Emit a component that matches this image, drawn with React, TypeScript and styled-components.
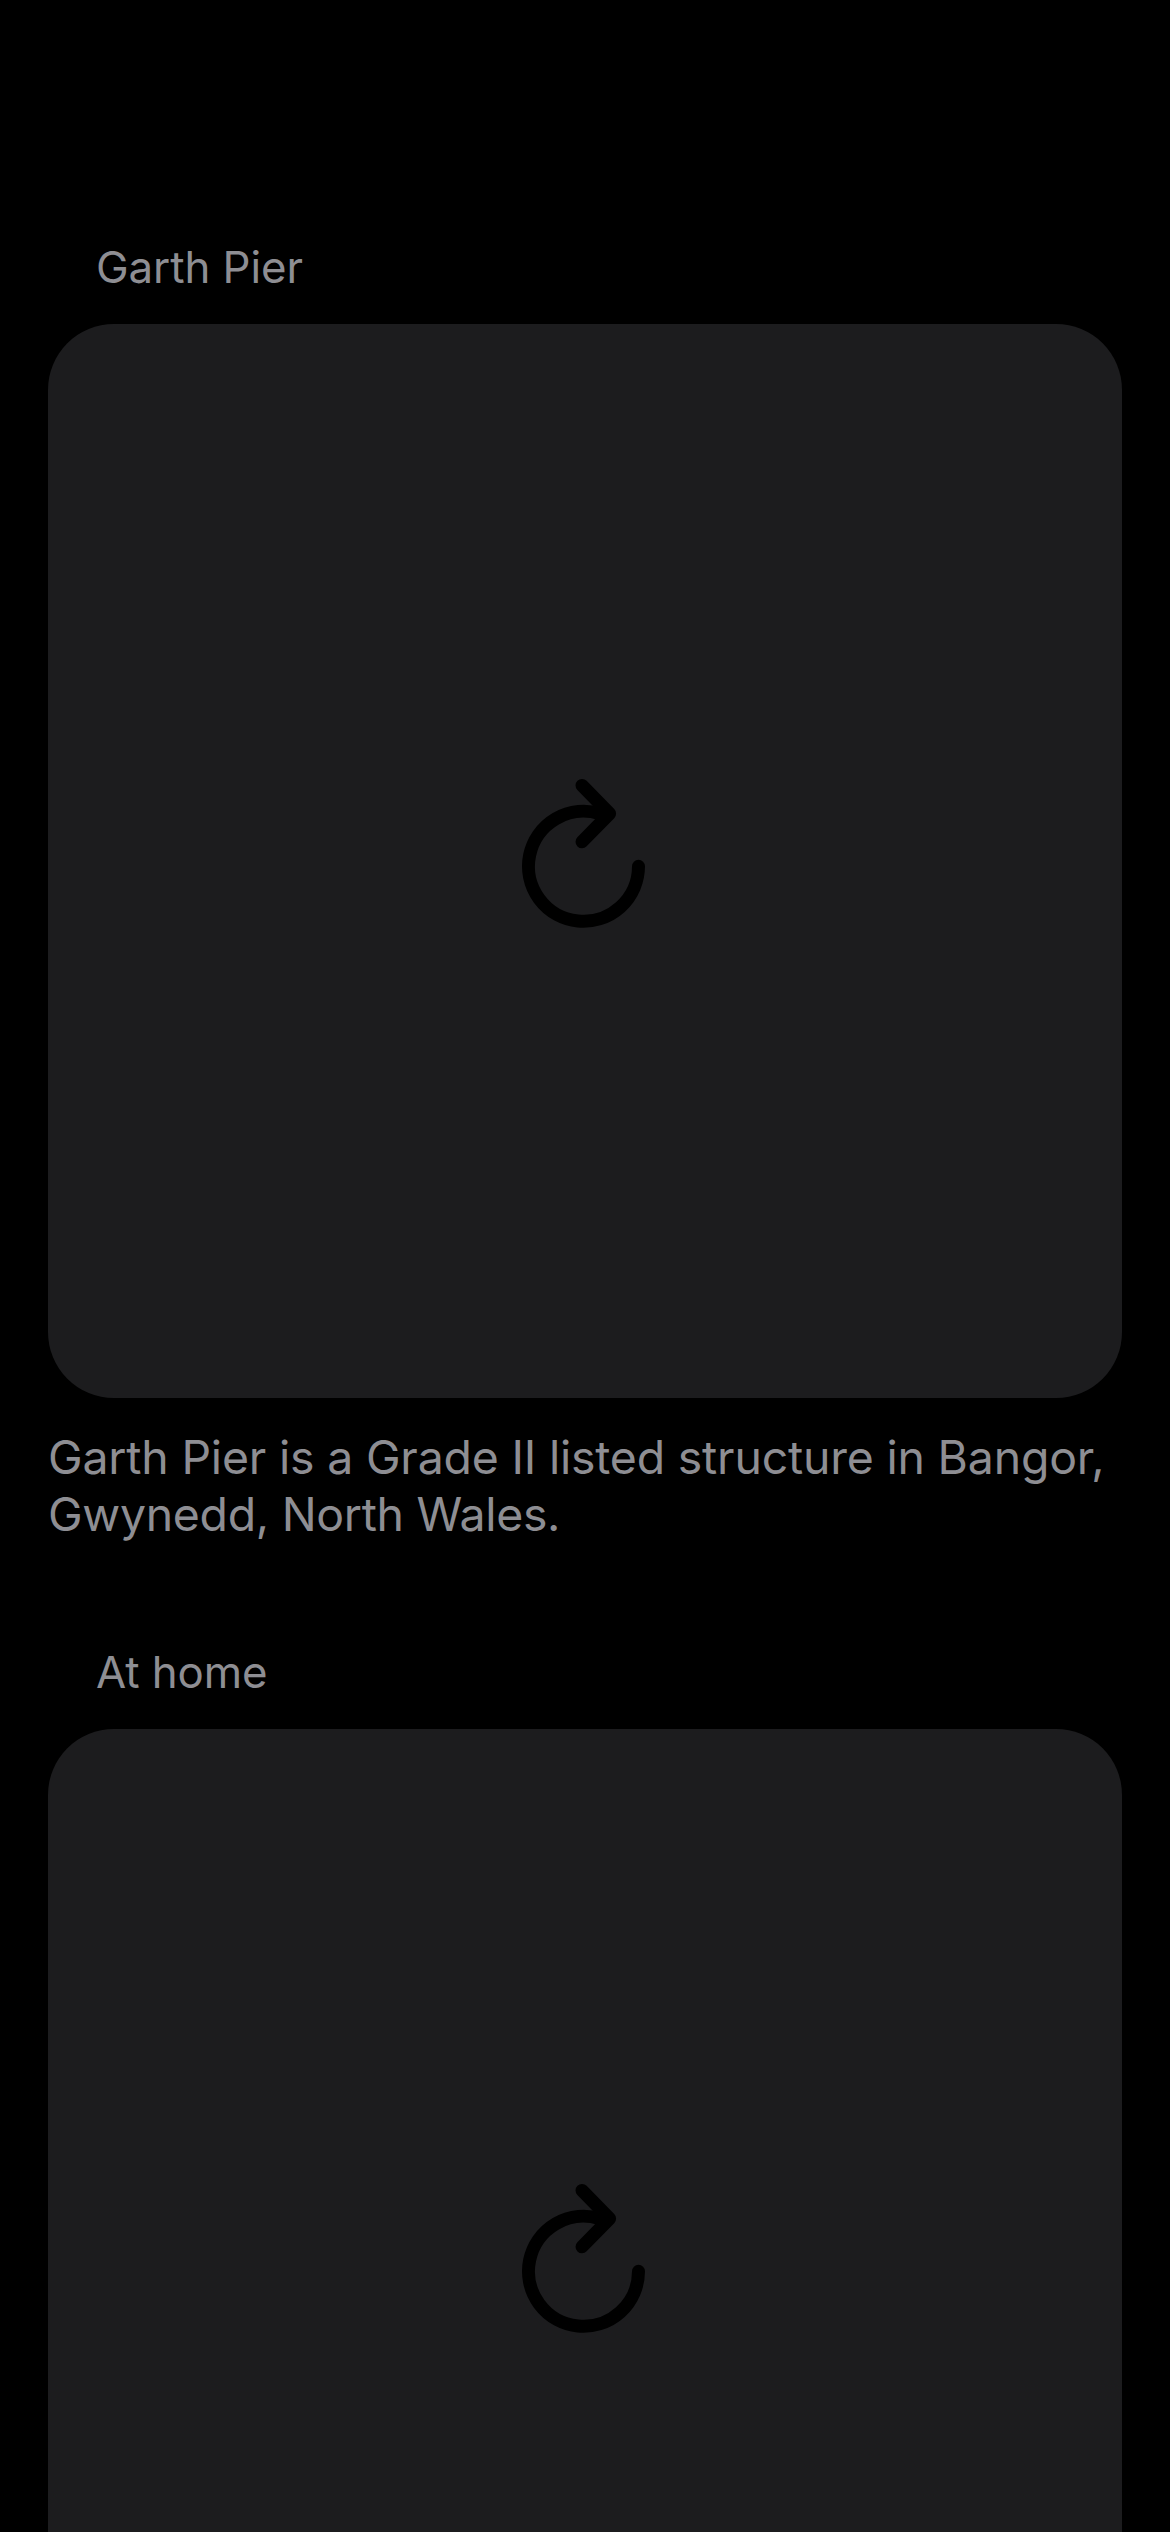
import React from "react";
import styled, { createGlobalStyle } from "styled-components";

const GlobalStyle = createGlobalStyle`
  html, body { margin: 0; padding: 0; background: #000; }
  * { box-sizing: border-box; }
`;

const Screen = styled.main`
  width: 1170px;
  height: 2532px;
  padding: 233px 48px 0;
  overflow: hidden;
  display: flex;
  flex-direction: column;
  gap: 93px;
  background: #000;
  color: #8e8e93;
  font-family: Inter, "Liberation Sans", sans-serif;
`;

const Section = styled.section`
  display: flex;
  flex-direction: column;
  flex-shrink: 0;
`;

const Title = styled.h2`
  margin: 0;
  height: 91px;
  padding: 8px 48px 0;
  font-size: 43.8px;
  font-weight: 400;
  line-height: 53px;
  letter-spacing: -0.08px;
  white-space: nowrap;
`;

const Card = styled.div`
  height: 1074px;
  border-radius: 66px;
  background: #1c1c1e;
  display: flex;
  align-items: center;
  justify-content: center;
`;

const Caption = styled.p`
  margin: 0;
  height: 147px;
  padding-top: 30.5px;
  font-size: 46.4px;
  line-height: 57px;
  white-space: nowrap;
`;

const Line = styled.span<{ $spacing: number }>`
  display: block;
  letter-spacing: ${(p) => p.$spacing}px;
`;

const ReloadIcon = () => (
  <svg
    width="170"
    height="202"
    viewBox="0 0 170 202"
    fill="none"
    stroke="#000"
    strokeWidth="13"
    strokeLinecap="round"
    strokeLinejoin="round"
  >
    <path d="M138.5 106.3A55 55 0 1 1 100 53.8" />
    <path d="M82 25.4L109.6 53.6L82 81.8" />
  </svg>
);

interface Item {
  title: string;
  caption: { text: string; spacing: number }[];
}

const items: Item[] = [
  {
    title: "Garth Pier",
    caption: [
      { text: "Garth Pier is a Grade II listed structure in Bangor,", spacing: -0.18 },
      { text: "Gwynedd, North Wales.", spacing: -0.3 },
    ],
  },
  { title: "At home", caption: [] },
];

export default function App() {
  return (
    <>
      <GlobalStyle />
      <Screen>
        {items.map((item) => (
          <Section key={item.title}>
            <Title>{item.title}</Title>
            <Card>
              <ReloadIcon />
            </Card>
            {item.caption.length > 0 && (
              <Caption>
                {item.caption.map((line) => (
                  <Line key={line.text} $spacing={line.spacing}>
                    {line.text}
                  </Line>
                ))}
              </Caption>
            )}
          </Section>
        ))}
      </Screen>
    </>
  );
}
